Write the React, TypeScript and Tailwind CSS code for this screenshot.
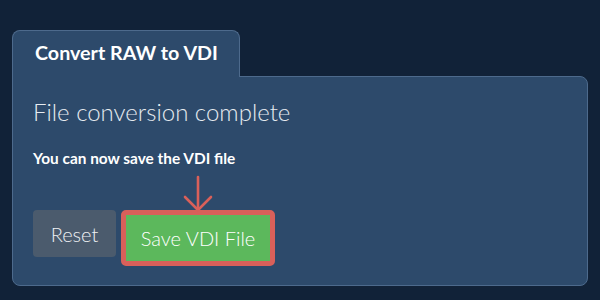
import React from "react";

export default function App() {
  return (
    <div
      className="w-[600px] h-[300px] bg-[#112238] pt-[30px] px-[12px]"
      style={{ fontFamily: "Lato, 'Noto Sans', sans-serif" }}
    >
      <div className="flex">
        <div className="relative z-10 -mb-px h-[47px] w-[228px] rounded-t-[8px] border border-b-0 border-[#4d6a8c] bg-[#2d4a6b] pl-[22px] pt-[10px]">
          <span className="text-[19.7px] leading-[24px] font-bold text-white">Convert RAW to VDI</span>
        </div>
      </div>
      <div className="rounded-b-[8px] rounded-tr-[8px] border border-[#4d6a8c] bg-[#2d4a6b] px-[20px] pt-[19px] pb-[19px]">
        <div className="text-[24px] leading-[32px] font-light text-[#e6ebf0]">File conversion complete</div>
        <div className="mt-[20px] text-[15.4px] leading-[20px] font-bold text-white">You can now save the VDI file</div>
        <div className="mt-[42px] flex items-start gap-[5px]">
          <button className="h-[47px] w-[83px] rounded-[4px] bg-[#4b5b6d] text-[20px] font-light text-[#eef1f4]">Reset</button>
          <div className="relative rounded-[5px] border-[5px] border-[#d9605a]">
            <svg
              className="absolute bottom-full left-1/2 -translate-x-1/2 mb-[2px]"
              width="30"
              height="38"
              viewBox="0 0 30 38"
              fill="none"
              stroke="#d9605a"
              strokeWidth="2.6"
              strokeLinecap="round"
              strokeLinejoin="round"
            >
              <path d="M15 2 V35" />
              <path d="M2 22 L15 35 L28 22" />
            </svg>
            <button className="h-[46px] w-[144px] bg-[#5cb85c] text-[20px] font-light text-white">Save VDI File</button>
          </div>
        </div>
      </div>
    </div>
  );
}
